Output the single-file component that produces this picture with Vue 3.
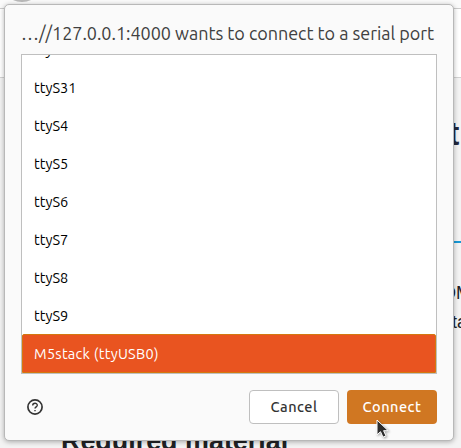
<script setup>
const ports = ['ttyS30', 'ttyS31', 'ttyS4', 'ttyS5', 'ttyS6', 'ttyS7', 'ttyS8', 'ttyS9', 'M5stack (ttyUSB0)']
const selected = 'M5stack (ttyUSB0)'
</script>

<template>
  <div class="screen">
    <div class="page">
      <div class="tabs"><span class="tab-dot"></span></div>
      <div class="toolbar"></div>
      <div class="content">
        <div class="title-end">t</div>
        <div class="rule"></div>
        <div class="copy"><span>OM</span><span>ta</span></div>
        <h2>Required material</h2>
      </div>
    </div>
    <section class="dialog">
      <h1>…//127.0.0.1:4000 wants to connect to a serial port</h1>
      <div class="list">
        <div v-for="port in ports" :key="port" class="row" :class="{ selected: port === selected }">
          <span>{{ port }}</span>
        </div>
      </div>
      <footer>
        <svg class="help" width="16" height="16" viewBox="0 0 16 16" fill="none" stroke="#333">
          <circle cx="8" cy="8" r="7.1" stroke-width="1.7" />
          <path d="M5.7 6.4C5.7 3.5 10.3 3.6 10.3 6.2C10.3 7.8 8 7.9 8 9.6" stroke-width="1.35" />
          <path d="M8 10.9V12.3" stroke-width="1.4" />
        </svg>
        <button class="cancel">Cancel</button>
        <button class="connect">Connect</button>
      </footer>
    </section>
    <svg class="cursor" width="14" height="21" viewBox="0 0 14 21">
      <path d="M1 1V15.8L4.5 12.7L7 18.2L10 16.9L7.6 11.7H12.2Z" fill="#2d2d2d" stroke="#fff" stroke-width="1" />
    </svg>
  </div>
</template>

<style>
body { margin: 0; }
</style>
<style scoped>
* { box-sizing: border-box; }
.screen {
  position: relative;
  width: 461px;
  height: 448px;
  overflow: hidden;
  font-family: Ubuntu, "Noto Sans", sans-serif;
}
.page { display: flex; flex-direction: column; height: 448px; background: #f3f3f3; }
.tabs { height: 9px; flex: none; background: #fafafa; border-bottom: 1px solid #ccc; overflow: hidden; }
.tab-dot { display: block; width: 24px; height: 12px; margin: -10px 0 0 10px; border-radius: 50%; background: #b9b9b9; }
.toolbar { height: 69px; flex: none; background: #fff; border-bottom: 1px solid #d2d2d2; }
.content { display: flex; flex-direction: column; font-family: "Liberation Sans", sans-serif; color: #202124; }
.title-end { height: 163px; padding: 35px 0 0 448px; font: bold 34px/40px "Liberation Sans", sans-serif; color: #23263a; }
.rule { height: 2px; margin-left: 440px; background: #1799d6; }
.copy { display: flex; flex-direction: column; height: 184px; padding: 36px 0 0 442px; font: 18px/29px "Liberation Sans", sans-serif; }
.copy span + span { padding-left: 10px; }
h2 { margin: 0 0 0 61px; font: bold 26.9px/28px "Liberation Sans", sans-serif; white-space: nowrap; }
.dialog {
  position: absolute;
  left: 4px;
  top: 4px;
  width: 450px;
  height: 437px;
  padding: 13px 16px 0;
  border: 1px solid #b8b8b8;
  border-radius: 5px;
  background: #fafafa;
  box-shadow: 0 1px 5px rgba(0, 0, 0, .3);
}
h1 { margin: 0; height: 36px; font-size: 18px; line-height: 31px; font-weight: 400; color: #404040; white-space: nowrap; letter-spacing: -.03px; }
.list {
  display: flex;
  flex-direction: column;
  justify-content: flex-end;
  width: 416px;
  height: 320px;
  border: 1px solid #bfbfbf;
  background: #fff;
  overflow: hidden;
}
.row { flex: none; display: flex; align-items: center; height: 38px; padding: 1px 12px 0; font-size: 14.5px; color: #000; }
.row.selected { height: 39px; padding-top: 0; background: #e95420; border: 1px solid #d4780f; padding-left: 11px; color: #fff; border-radius: 2px 2px 0 0; letter-spacing: .28px; }
footer { display: flex; align-items: center; padding: 16px 0 0 6px; }
.help { margin-right: auto; }
button { width: 90px; height: 34px; padding: 0; border-radius: 4px; font: 500 14.5px/20px Ubuntu, "Noto Sans", sans-serif; letter-spacing: .5px; }
.cancel { margin-right: 8px; border: 1px solid #bfbfbf; background: #fff; color: #333; }
.connect { border: 0; background: #d07722; color: #fff; }
.cursor { position: absolute; left: 376px; top: 419px; filter: drop-shadow(1px 1px 1px rgba(0, 0, 0, .35)); }
</style>
